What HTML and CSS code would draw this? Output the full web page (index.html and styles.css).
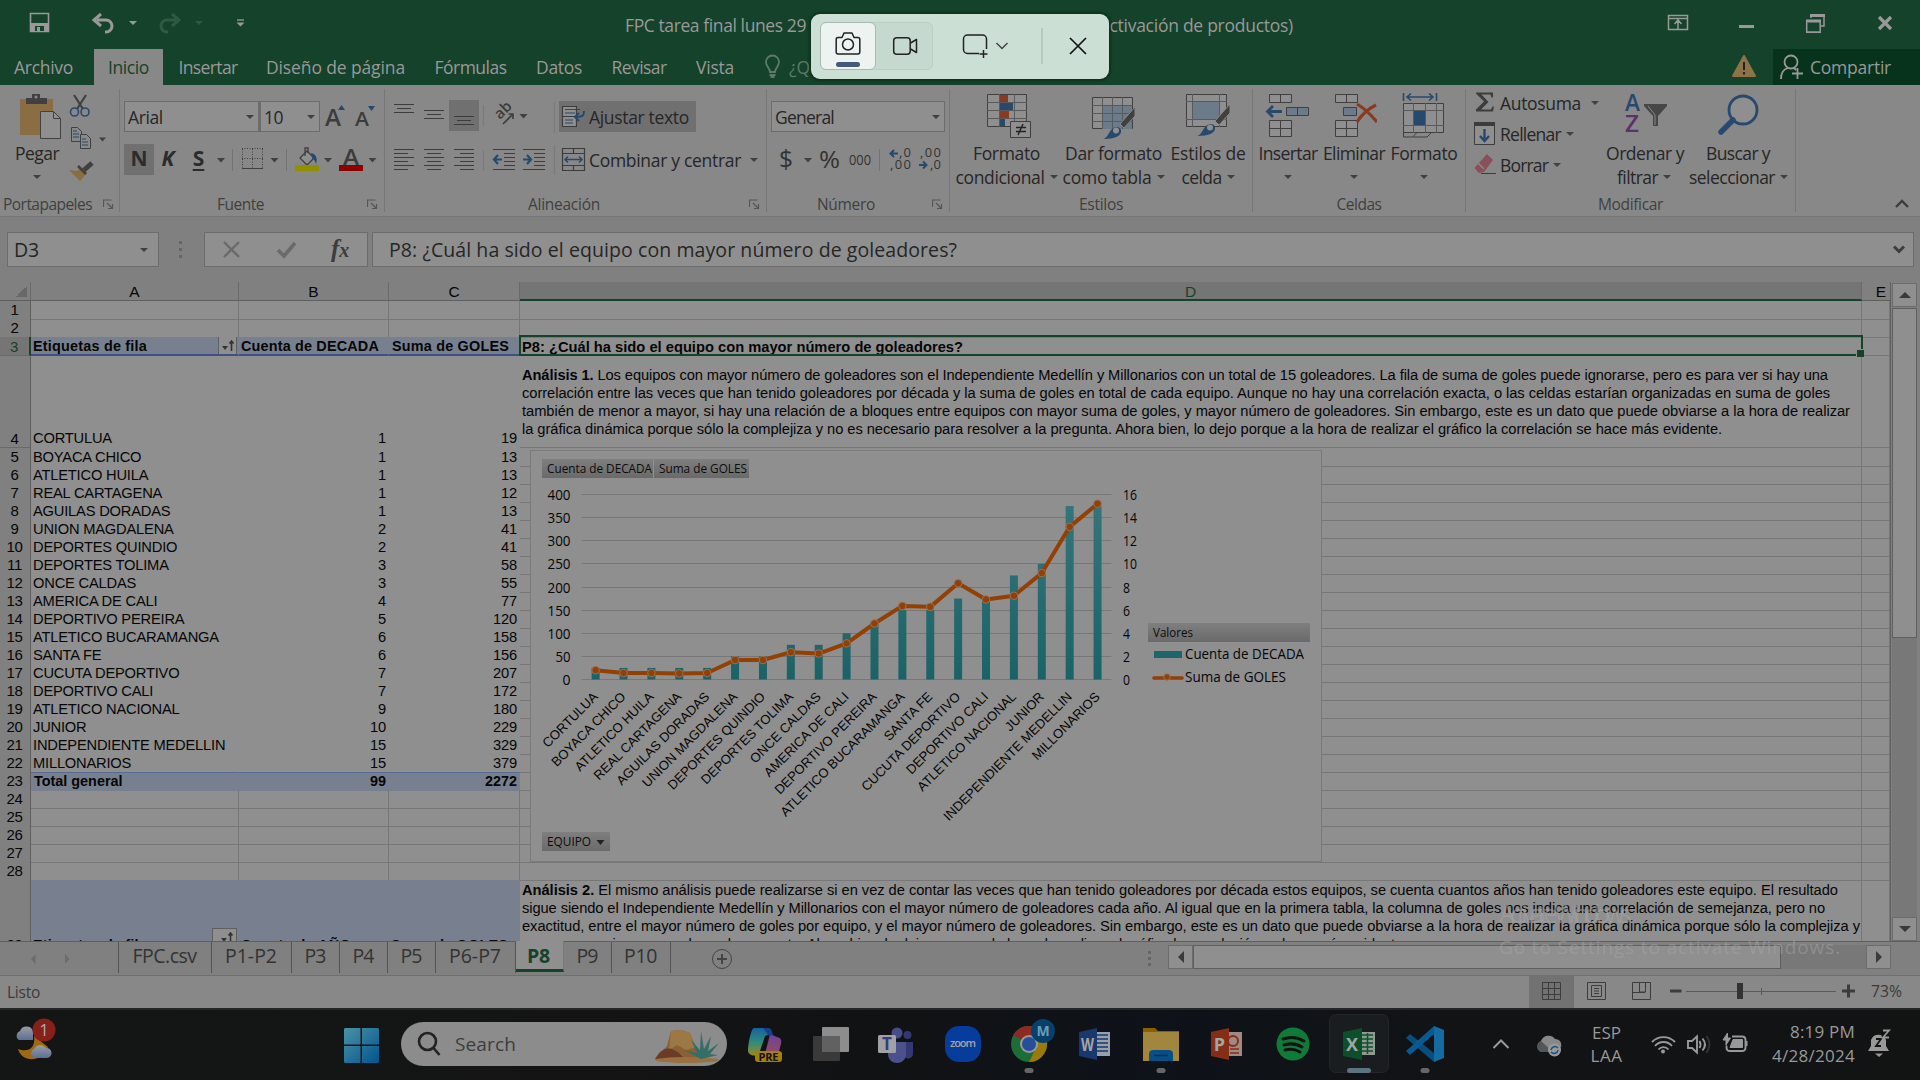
FILE: index.html
```html
<!DOCTYPE html>
<html lang="es">
<head>
<meta charset="utf-8">
<title>FPC tarea final</title>
<link rel="stylesheet" href="styles.css">
</head>
<body>
<div class="screen">

<header class="titlebar">
  <svg class="quick" width="260" height="49" viewBox="0 0 260 49" fill="none">
    <path d="M30.5 13.5h18v18h-18z" stroke="#999" stroke-width="1.6"/><path d="M31 23h17v9h-17z" fill="#999"/><path d="M35 26h9v5h-9z" fill="#15422a"/><path d="M37 27h3v5h-3z" fill="#999"/>
    <path d="M97 20h9a6 6 0 0 1 0 12h-1M101 14l-7 6 7 6" stroke="#999" stroke-width="3"/>
    <path d="M129 21h8l-4 4z" fill="#999"/>
    <path d="M176 20h-9a6 6 0 0 0 0 12h1M172 14l7 6-7 6" stroke="#2f5a42" stroke-width="3"/>
    <path d="M195 21h8l-4 4z" fill="#2f5a42"/>
    <path d="M237 20h7" stroke="#999" stroke-width="1.3"/><path d="M236.500 22.500h8l-4 4z" fill="#999"/>
  </svg>
  <div class="doc"><span data-w="181">FPC tarea final lunes 29</span><span data-w="193">activación de productos)</span></div>
  <svg class="winctl" width="260" height="49" viewBox="1660 0 260 49" fill="none" stroke="#999">
    <path d="M1668.500 15.500h19v14h-19zM1668.500 18.500h19M1678 29v-9M1674.500 24l3.500-4 3.500 4" stroke-width="1.5"/>
    <path d="M1739 26.500h15" stroke-width="3"/>
    <path d="M1811 18v-3h13v11h-3" stroke-width="1.5"/><path d="M1810 15.500h15M1806 21h15" stroke-width="3"/><path d="M1806.700 20v12h13.500v-12" stroke-width="1.500"/><path d="M1806 32.500h15" stroke-width="1"/>
    <path d="M1879 17l12 12M1891 17l-12 12" stroke-width="3.200"/>
  </svg>
</header>

<nav class="tabs">
  <span class="tab t1"><b data-w="59">Archivo</b></span>
  <span class="tab t2 on"><b data-w="41">Inicio</b></span>
  <span class="tab t3"><b data-w="59">Insertar</b></span>
  <span class="tab t4"><b data-w="139">Diseño de página</b></span>
  <span class="tab t5"><b data-w="72">Fórmulas</b></span>
  <span class="tab t6"><b data-w="46">Datos</b></span>
  <span class="tab t7"><b data-w="55">Revisar</b></span>
  <span class="tab t8"><b data-w="38">Vista</b></span>
  <svg class="bulb" width="16" height="26" viewBox="0 -1 16 26" fill="none" stroke="#5d7a69" stroke-width="1.800"><path d="M5 17c0-4-4-5-4-10a6.500 6.500 0 0 1 13 0c0 5-4 6-4 10zM4.500 20h6M5.500 22h4"/></svg>
  <span class="ask">¿Qué desea</span>
  <svg class="warn" width="24" height="24" viewBox="0 0 24 24"><path d="M12 2l11 20H1z" fill="#8d7447" stroke="#8d7447" stroke-width="2" stroke-linejoin="round"/><path d="M12 8v8M12 18v2.500" stroke="#222" stroke-width="2"/></svg>
  <span class="share"><svg width="24" height="26" viewBox="0 0 24 26" fill="none" stroke="#999" stroke-width="1.800"><circle cx="11" cy="8" r="6.500"/><path d="M1 25c0-6 3-10 7-11M14 14l2 2M17.500 14v11M12 19.500h11"/></svg><b data-w="81">Compartir</b></span>
</nav>

<section class="ribbon">
  <div class="group g1">
    <div class="body">
      <div class="big paste">
        <svg width="42" height="46" viewBox="20 93 42 46"><path d="M20 99h33v36h-33z" fill="#8a6d42"/><path d="M26 98h6v-4h8v4h7v6h-21z" fill="#404040"/><circle cx="36" cy="97" r="1.500" fill="#888"/><path d="M40.500 111.500h13l7 7v20h-20z" fill="#8f8f8f" stroke="#404040"/><path d="M53.500 111.500v7h7" fill="none" stroke="#404040"/></svg>
        <span data-w="44">Pegar</span><i class="caret"></i>
      </div>
      <svg width="46" height="92" viewBox="66 93 46 92" fill="none">
        <path d="M74 95l9 14M86 95l-9 14" stroke="#404040" stroke-width="2.200"/><circle cx="74.500" cy="112" r="4" stroke="#27496d" stroke-width="1.600"/><circle cx="85" cy="112" r="4" stroke="#27496d" stroke-width="1.600"/>
        <path d="M71.500 127.500h6l4 4v10h-10z" stroke="#404040"/><path d="M73 131h4M73 134h6M73 137h6" stroke="#27496d"/>
        <path d="M80.500 134.500h6l4 4v10h-10z" fill="#8a8a8a" stroke="#404040"/><path d="M82 139h4M82 142h6M82 145h6" stroke="#27496d"/>
        <path d="M99 137.500h7l-3.500 4z" fill="#404040"/>
        <path d="M92 163l-9 8" stroke="#404040" stroke-width="5"/><path d="M69 170l7 1 6-3 5 5-7 8z" fill="#8a6d42"/><path d="M78 166l8 8" stroke="#404040" stroke-width="2.500"/>
      </svg>
    </div>
    <div class="label"><span data-w="89">Portapapeles</span><svg class="dlg" width="11" height="11" viewBox="0 0 11 11"><use href="#launch"/></svg></div>
  </div>

  <div class="group g2">
    <div class="body col">
      <div class="line"><span class="combo font">Arial<i class="caret"></i></span><span class="combo size">10<i class="caret"></i></span>
        <svg width="56" height="32" viewBox="322 101 56 32"><text x="325" y="126" class="ga" font-size="24" textLength="16" lengthAdjust="spacingAndGlyphs">A</text><path d="M338 110h7l-3.500-5z" fill="#27496d"/><text x="355" y="126" class="ga" font-size="20" textLength="14" lengthAdjust="spacingAndGlyphs">A</text><path d="M368 106h7l-3.500 5z" fill="#27496d"/></svg></div>
      <div class="line"><span class="biu on">N</span><span class="biu it">K</span><span class="biu un">S</span>
        <svg width="166" height="32" viewBox="214 144 166 32" fill="none">
          <path d="M217 158h8l-4 4.500zM270.500 158h8l-4 4.500zM324 158h8l-4 4.500zM368.500 158h8l-4 4.500z" fill="#404040"/>
          <path d="M232.500 149v22M286.500 149v22" stroke="#747474"/>
          <path d="M242.500 149v19M262.500 149v19M252.500 149v19M242 148.500h21M242 158.500h21" stroke="#404040" stroke-dasharray="1 1.500"/><path d="M242 168.500h21" stroke="#404040"/>
          <path d="M300 158l7-7 7 7-7 7z" fill="#8f8f8f" stroke="#404040" stroke-width="1.300"/><path d="M305 156v-8h3v5" stroke="#404040" stroke-width="1.300"/><path d="M311 153c5 1 7 5 5 11-1-4-3-5-4-6z" fill="#27496d"/><path d="M295 165h24v6h-24z" fill="#919100"/>
          <text x="343" y="164.500" class="ga" font-size="21" textLength="16" lengthAdjust="spacingAndGlyphs">A</text><path d="M339 165h24v6h-24z" fill="#8c0000"/>
        </svg></div>
    </div>
    <div class="label"><span data-w="47">Fuente</span><svg class="dlg" width="11" height="11" viewBox="0 0 11 11"><g id="launch" fill="none" stroke="#555"><path d="M.5 8V1h8M4 4l5 5M9.500 5v4.500H5" stroke-width="1.200"/></g></svg></div>
  </div>

  <div class="group g3">
    <div class="body col">
      <div class="line">
        <svg width="172" height="34" viewBox="387 100 172 34" fill="none" stroke="#3c3c3c" stroke-width="1.200">
          <path d="M449 100h30v31h-30z" fill="#707070" stroke="none"/>
          <path d="M394 104.500h20M397 108.500h14M394 112.500h20M424 110.500h20M427 114.500h14M424 118.500h20M454 116.500h20M457 120.500h14M454 124.500h20"/>
          <path d="M483.500 105v21M554.500 102v31" stroke="#7b7b7b"/>
          <text x="0" y="0" transform="translate(500 120) rotate(-45)" class="ga" stroke="none" font-size="15">ab</text>
          <path d="M503 124l10-10M508.500 114h4.500v5" stroke-width="1.600"/><path d="M519.500 114h8l-4 4.500z" fill="#404040" stroke="none"/>
        </svg>
        <span class="wrapbtn"><svg width="25" height="24" viewBox="562 104 25 24" fill="none" stroke="#3c3c3c" stroke-width="1.200"><path d="M563.500 105.500h14v20h-14zM563.500 115.500h14" fill="#8f8f8f"/><path d="M566 108.500h15M566 112h10M566 119h8M566 122h8" stroke="#27496d"/><path d="M585 110c0 5-2 6-8 6M580 112l-4 4 4 4" stroke="#27496d" stroke-width="2"/></svg><span data-w="100">Ajustar texto</span></span>
      </div>
      <div class="line">
        <svg width="200" height="30" viewBox="387 145 200 30" fill="none" stroke="#3c3c3c" stroke-width="1.200">
          <path d="M394 149.500h20M394 153.500h14M394 157.500h20M394 161.500h14M394 165.500h20M394 169.500h14M424 149.500h20M427 153.500h14M424 157.500h20M427 161.500h14M424 165.500h20M427 169.500h14M454 149.500h20M460 153.500h14M454 157.500h20M460 161.500h14M454 165.500h20M460 169.500h14"/>
          <path d="M483.500 150v21" stroke="#7b7b7b"/>
          <path d="M493 149.500h22M504 153.500h11M504 157.500h11M504 161.500h11M504 165.500h11M493 169.500h22M523 149.500h22M534 153.500h11M534 157.500h11M534 161.500h11M534 165.500h11M523 169.500h22"/>
          <path d="M502 159.500h-8M498 155l-4 4.500 4 4.500M523 159.500h8M527 155l4 4.500-4 4.500" stroke="#27496d" stroke-width="2.200"/>
          <path d="M554.500 145v30" stroke="#7b7b7b"/>
          <path d="M562.500 148.500h22v22h-22zM562.500 153.500h22M562.500 165.500h22M573.500 148v5M573.500 166v5"/><path d="M565 159.500h17M568 156.500l-3 3 3 3M579 156.500l3 3-3 3" stroke="#27496d" stroke-width="1.500"/>
        </svg>
        <span class="merge" data-w="152">Combinar y centrar</span><i class="caret"></i>
      </div>
    </div>
    <div class="label"><span data-w="72">Alineación</span><svg class="dlg" width="11" height="11" viewBox="0 0 11 11"><use href="#launch"/></svg></div>
  </div>

  <div class="group g4">
    <div class="body col">
      <div class="line"><span class="combo num"><span data-w="59">General</span><i class="caret"></i></span></div>
      <div class="line">
        <svg width="174" height="32" viewBox="771 144 174 32" fill="none">
          <g class="gn"><text x="779" y="168" font-size="25" textLength="14" lengthAdjust="spacingAndGlyphs">$</text><text x="819" y="168" font-size="24" textLength="21" lengthAdjust="spacingAndGlyphs">%</text><text x="849" y="164.500" font-size="14" textLength="22" lengthAdjust="spacingAndGlyphs">000</text><text x="899" y="157" font-size="13" textLength="12">,0</text><text x="890" y="169" font-size="13" textLength="21">,00</text><text x="920" y="157" font-size="13" textLength="21">,00</text><text x="930" y="169" font-size="13" textLength="11">,0</text></g>
          <path d="M804 158h8l-4 4.500z" fill="#404040"/><path d="M879.500 149v22" stroke="#747474"/>
          <path d="M898 153.500h-7M894 150l-3.500 3.500 3.500 3.500M919 165h7M923 161.500l3.500 3.500-3.500 3.500" stroke="#27496d" stroke-width="2"/>
        </svg>
      </div>
    </div>
    <div class="label"><span data-w="58">Número</span><svg class="dlg" width="11" height="11" viewBox="0 0 11 11"><use href="#launch"/></svg></div>
  </div>

  <div class="group g5">
    <div class="body">
      <div class="big b51">
        <svg width="46" height="46" viewBox="986 93 46 46" fill="none" stroke="#3f3f3f"><path d="M987.500 94.500h39v32h-39z" fill="#8f8f8f"/><path d="M987 102.500h40M987 110.500h40M987 118.500h40M999.500 94v33M1014.500 94v33" stroke="#5a5a5a"/><path d="M1000 95h8v7h-8zM1000 111h9v7h-9z" fill="#8a3a22" stroke="none"/><path d="M1000 103h13v7h-13zM1000 119h5v7h-5z" fill="#27496d" stroke="none"/><path d="M1010.500 121.500h20v16h-20z" fill="#8f8f8f"/><path d="M1016 127.500h10M1016 131.500h10M1023 124l-5 11" stroke="#222" stroke-width="1.400"/></svg>
        <span data-w="67">Formato</span><span class="l2"><span data-w="89">condicional</span><i class="caret"></i></span>
      </div>
      <div class="big b52">
        <svg width="46" height="46" viewBox="1093 93 46 46" fill="none" stroke="#3f3f3f"><path d="M1094.500 97.500h40v31h-40z" fill="#8f8f8f"/><path d="M1105 105h29v24h-29z" fill="#6b7b8a" stroke="none"/><path d="M1094 105.500h41M1094 113.500h41M1094 121.500h41M1104.500 97v32M1114.500 97v32M1124.500 97v32" stroke="#5a5a5a"/><path d="M1137 107v9l-11 12-4-4z" fill="#404040" stroke="#888"/><path d="M1105 139c4-1 5-5 8-9 3-4 9-4 10 0 1 6-6 9-18 9z" fill="#27496d" stroke="none"/><circle cx="1118" cy="130.500" r="3" fill="#8f8f8f" stroke="none"/></svg>
        <span data-w="97">Dar formato</span><span class="l2"><span data-w="89">como tabla</span><i class="caret"></i></span>
      </div>
      <div class="big b53">
        <svg width="46" height="46" viewBox="1186 93 46 46" fill="none" stroke="#3f3f3f"><path d="M1187.500 94.500h40v32h-40z" fill="#8f8f8f"/><path d="M1187 101.500h41M1187 119.500h41M1193.500 94v33M1220.500 94v33" stroke="#5a5a5a"/><path d="M1194 102h26v17h-26z" fill="#6b7b8a" stroke="none"/><path d="M1231 104v9l-11 12-4-4z" fill="#404040" stroke="#888"/><path d="M1198 136c4-1 5-5 8-9 3-4 9-4 10 0 1 6-6 9-18 9z" fill="#27496d" stroke="none"/><circle cx="1211" cy="127.500" r="3" fill="#8f8f8f" stroke="none"/></svg>
        <span data-w="75">Estilos de</span><span class="l2"><span data-w="40">celda</span><i class="caret"></i></span>
      </div>
    </div>
    <div class="label"><span data-w="44">Estilos</span></div>
  </div>

  <div class="group g6">
    <div class="body">
      <div class="big b61">
        <svg width="46" height="46" viewBox="1266 93 46 46" fill="none" stroke="#3f3f3f"><path d="M1270.500 94.500h22v8h-22zM1281.500 94v8M1270.500 120.500h22v16h-22zM1270.500 128.500h22M1281.500 120v16" fill="#8f8f8f"/><path d="M1287.500 107.500h22v8h-22zM1298.500 107v8" fill="#6b7b8a"/><path d="M1283 111.500h-14M1274 106l-5.500 5.500 5.500 5.500" stroke="#27496d" stroke-width="2.800"/></svg>
        <span data-w="59">Insertar</span><i class="caret"></i>
      </div>
      <div class="big b62">
        <svg width="46" height="46" viewBox="1331 93 46 46" fill="none" stroke="#3f3f3f"><path d="M1335.500 94.500h22v8h-22zM1346.500 94v8M1335.500 120.500h22v16h-22zM1335.500 128.500h22M1346.500 120v16" fill="#8f8f8f"/><path d="M1343.500 107.500h13v8h-13z" fill="#6b7b8a"/><path d="M1357 104q10 6 20 18M1376 105q-12 6-19 17" stroke="#8a3a22" stroke-width="3.200"/></svg>
        <span data-w="62">Eliminar</span><i class="caret"></i>
      </div>
      <div class="big b63">
        <svg width="46" height="46" viewBox="1401 93 46 46" fill="none" stroke="#3f3f3f"><path d="M1403.500 103.500h40v29h-40z" fill="#8f8f8f"/><path d="M1403 110.500h41M1403 125.500h41M1413.500 103v30M1425.500 103v30M1436.500 103v30" stroke="#5a5a5a"/><path d="M1414 111h11v14h-11z" fill="#27496d" stroke="none"/><path d="M1403.500 132v5h9l4-4M1413 137h14l4-4"/><path d="M1403.500 93v8M1436.500 93v8M1407 97h26M1411 93.500l-4 3.500 4 3.500M1429 93.500l4 3.500-4 3.500" stroke="#27496d" stroke-width="1.600"/></svg>
        <span data-w="67">Formato</span><i class="caret"></i>
      </div>
    </div>
    <div class="label"><span data-w="45">Celdas</span></div>
  </div>

  <div class="group g7">
    <div class="body">
      <div class="edit">
        <div><svg width="24" height="24" viewBox="1473 92 24 24"><path d="M1476 93.500h17v5h-1.500l-1-3h-9l7 7.500-7.500 7.500h10l1.500-3h1.500l-1 5h-17v-2l8-8-8-8z" fill="#3c3c3c"/></svg><span data-w="81">Autosuma</span><i class="caret far"></i></div>
        <div><svg width="24" height="24" viewBox="1473 122 24 24" fill="none"><path d="M1474.500 122.500h20v22h-20z" fill="#8f8f8f" stroke="#3c3c3c"/><path d="M1474 122h21v4h-21z" fill="#3c3c3c"/><path d="M1484.500 129v12M1480 136l4.500 5 4.500-5" stroke="#27496d" stroke-width="2.400"/></svg><span data-w="61">Rellenar</span><i class="caret"></i></div>
        <div><svg width="24" height="24" viewBox="1473 153 24 24"><path d="M1487 154l6 6-9 12-5 1-4.500-5z" fill="#8a4f59"/><path d="M1478 163l6 6" stroke="#888" stroke-width="1.500"/><path d="M1481 173.500h15" stroke="#3c3c3c"/></svg><span data-w="48">Borrar</span><i class="caret"></i></div>
      </div>
      <div class="big b71">
        <svg width="46" height="46" viewBox="1622 93 46 46"><text x="1625" y="111" font-size="23" fill="#27496d" class="az" textLength="15" lengthAdjust="spacingAndGlyphs">A</text><text x="1625" y="132" font-size="23" fill="#5a3169" class="az" textLength="14" lengthAdjust="spacingAndGlyphs">Z</text><path d="M1644 104h23v2l-9 10v10h-5v-10l-9-10z" fill="#474747"/><path d="M1648 106l7 9v10" stroke="#888" fill="none"/></svg>
        <span data-w="78">Ordenar y</span><span class="l2"><span data-w="41">filtrar</span><i class="caret"></i></span>
      </div>
      <div class="big b72">
        <svg width="46" height="46" viewBox="1716 93 46 46"><circle cx="1744" cy="110" r="14" fill="#8f8f8f" stroke="#27496d" stroke-width="2.800"/><path d="M1734 120l-12 12" stroke="#27496d" stroke-width="5.500" stroke-linecap="round"/></svg>
        <span data-w="64">Buscar y</span><span class="l2"><span data-w="86">seleccionar</span><i class="caret"></i></span>
      </div>
    </div>
    <div class="label"><span data-w="65">Modificar</span></div>
  </div>
  <svg class="collapse" width="14" height="9" viewBox="0 0 14 9" fill="none" stroke="#3c3c3c" stroke-width="2.400"><path d="M1 8l6-6 6 6"/></svg>
</section>

<section class="formula">
  <span class="fbox name"><span data-w="25">D3</span><i class="caret"></i></span>
  <svg class="vdots" width="4" height="17" viewBox="0 0 4 17" fill="#666"><path d="M0 0h3v3H0zM0 7h3v3H0zM0 14h3v3H0z"/></svg>
  <span class="fbox fx"><svg width="106" height="33" viewBox="222 233 106 33" fill="none" stroke="#6a6a6a"><path d="M224 242l15 15M239 242l-15 15" stroke-width="2.400"/><path d="M278 250l6 6 11-13" stroke-width="3.600"/></svg><em>f<small>x</small></em></span>
  <span class="fbox text"><span data-w="568">P8: ¿Cuál ha sido el equipo con mayor número de goleadores?</span><svg width="12" height="9" viewBox="0 0 12 9" fill="none" stroke="#3c3c3c" stroke-width="3"><path d="M1 1.500l5 5 5-5"/></svg></span>
</section>

<main class="work">
  <div class="sheet">
    <div class="row head"><span class="corner"></span><span>A</span><span>B</span><span>C</span><span class="sel">D</span><span class="last">E</span></div>
    <div class="rows" id="rows"></div>
    <div class="cursor"></div>
    <svg class="chart" id="chart" width="793" height="413" viewBox="530 449 793 413"></svg>
  </div>
  <div class="vscroll"><span class="sb"><i class="up"></i></span><span class="thumb"></span><span class="track"></span><span class="sb"><i class="dn"></i></span></div>
</main>

<section class="sheettabs">
  <svg class="nav" width="118" height="34" viewBox="0 0 118 34" fill="#6c6c6c"><path d="M35.500 12v10l-4.500-5zM65 12v10l4.500-5z"/></svg>
  <span class="st s1"><b data-w="64">FPC.csv</b></span><span class="st s2"><b data-w="52">P1-P2</b></span><span class="st s3"><b data-w="21">P3</b></span><span class="st s3"><b data-w="21">P4</b></span><span class="st s3"><b data-w="21">P5</b></span><span class="st s2"><b data-w="52">P6-P7</b></span><span class="st s3 on"><b data-w="23">P8</b></span><span class="st s3"><b data-w="21">P9</b></span><span class="st s4"><b data-w="33">P10</b></span>
  <svg class="plus" width="22" height="22" viewBox="0 0 22 22" fill="none" stroke="#444"><circle cx="11" cy="11" r="9.500"/><path d="M11 6v10M6 11h10" stroke-width="2"/></svg>
  <svg class="hdots" width="4" height="16" viewBox="0 0 4 16" fill="#666"><path d="M0 0h3v3H0zM0 6h3v3H0zM0 12h3v3H0z"/></svg>
  <div class="hscroll"><span class="sb"><i class="lf"></i></span><span class="thumb"></span><span class="track"></span><span class="sb"><i class="rt"></i></span></div>
</section>

<footer class="status">
  <span class="ready" data-w="33">Listo</span>
  <svg width="391" height="32" viewBox="1529 976 391 32" fill="none" stroke="#3c3c3c">
    <path d="M1529 976h45v32h-45z" fill="#727272" stroke="none"/>
    <path d="M1542.500 982.500h18v17h-18zM1542 988.500h19M1542 994.500h19M1548.500 982v18M1554.500 982v18"/>
    <path d="M1587.500 982.500h18v17h-18zM1591.500 985.500h10v11h-10zM1594 988.500h5M1594 991h5M1594 993.500h5"/>
    <path d="M1632.500 982.500h18v17h-18zM1639.500 982v10h6v-10M1632 992.500h13"/>
    <path d="M1670 991h11.500M1842 991h13M1848.500 984.500v13" stroke-width="3"/>
    <path d="M1686 991.500h150M1761.500 988v7" stroke="#5a5a5a"/><path d="M1737 983h6v16h-6z" fill="#333" stroke="none"/>
    <text x="1871" y="997" class="pct" textLength="31" lengthAdjust="spacingAndGlyphs">73%</text>
  </svg>
</footer>

<footer class="taskbar">
  <svg class="weather" width="60" height="60" viewBox="0 1014 60 60">
    <defs><linearGradient id="cl" x1="0" y1="0" x2="0" y2="1"><stop offset="0" stop-color="#9a9ca2"/><stop offset="1" stop-color="#5d6f96"/></linearGradient>
    <linearGradient id="win" x1="0" y1="0" x2="1" y2="1"><stop offset="0" stop-color="#4b93a5"/><stop offset="1" stop-color="#00548f"/></linearGradient></defs>
    <path d="M34 1036c2 12-6 17-16 13 4 14 24 14 30-2z" fill="#a0680f"/>
    <path d="M19 1040a5 5 0 0 1 1-9 7 7 0 0 1 13 0v9z" fill="url(#cl)"/><path d="M34 1058a5 5 0 0 1 0-9 7 7 0 0 1 12-1 5 5 0 0 1 1 10z" fill="url(#cl)"/>
    <circle cx="44" cy="1030" r="11.500" fill="#85201a"/><text x="44" y="1036" class="one">1</text>
  </svg>
  <svg class="start" width="35" height="35" viewBox="0 0 35 35" fill="url(#win)"><path d="M1 0h15.500v16.500H0V1zM18 0h16l1 1v15.500H18zM0 18h16.500v17H1l-1-1zM18 18h17v16l-1 1H18z"/></svg>
  <div class="search">
    <svg width="25" height="26" viewBox="0 0 25 26" fill="none" stroke="#222" stroke-width="2.600"><circle cx="10.500" cy="10.500" r="8.500"/><path d="M16.500 17l6 7"/></svg><span data-w="61">Search</span>
    <svg class="desert" width="66" height="36" viewBox="0 0 66 36"><path d="M2 31l12-13 4-15 10-1 9 3 6 14 11 12z" fill="#8a6035"/><path d="M18 3l10-1 9 3 6 14-10 3-9-5-8 5z" fill="#9c7844"/><path d="M2 31c8-14 16-12 24-6l8 8z" fill="#6b3c25"/><ellipse cx="34" cy="32" rx="32" ry="3" fill="#99703f"/><path d="M48 31L31 22l13 3-6-13 9 10 1-19 3 18 7-13-3 15 11-8-9 11 8 1z" fill="#336f68"/></svg>
  </div>
  <div class="apps">
    <svg viewBox="0 0 66 72"><defs><linearGradient id="cp" x1="0" y1="0" x2="0" y2="1"><stop offset="0" stop-color="#17629b"/><stop offset=".5" stop-color="#2e8b7e"/><stop offset="1" stop-color="#9a8a1a"/></linearGradient><linearGradient id="cq" x1="0" y1="0" x2="0" y2="1"><stop offset="0" stop-color="#6a3fa0"/><stop offset="1" stop-color="#a0504a"/></linearGradient></defs><path d="M22 20h12c4 0 5 2 6 5l-7 3-6 18c-1 3-11 2-11-3 0-6 3-23 6-23z" fill="url(#cp)"/><path d="M38 26l7 3c4 1 5 3 4 7l-4 14H32z" fill="url(#cq)"/><path d="M31 20h5c3 0 4 3 5 7l-4 1z" fill="#17408a"/><rect x="23" y="43" width="27" height="11" rx="3" fill="#a37f0b"/><text x="36.500" y="52.500" class="pre" textLength="20">PRE</text></svg>
    <svg viewBox="0 0 66 72"><rect x="15" y="28" width="27" height="25" rx="1" fill="#3a3a3a"/><rect x="24" y="19" width="27" height="25" rx="1" fill="#8d8d8d"/><path d="M24 28h18v16H24z" fill="#616161"/></svg>
    <svg viewBox="0 0 66 72"><circle cx="33" cy="25" r="5.500" fill="#474b86"/><circle cx="43.500" cy="27" r="4" fill="#34376f"/><path d="M38 34h11v12c0 5-8 6-9 2z" fill="#34386f"/><path d="M24 34h18v12c0 12-18 12-18 0z" fill="#4c508c"/><rect x="14" y="27" width="18" height="18" rx="1.500" fill="#a0a0a5"/><text x="23" y="42" class="lt" fill="#363b82">T</text></svg>
    <svg viewBox="0 0 66 72"><rect x="15" y="18" width="36" height="36" rx="14" fill="#063c9b"/><text x="33" y="39" class="zm" textLength="26">zoom</text></svg>
    <svg viewBox="0 0 66 72"><circle cx="33" cy="36" r="18" fill="#1d6d36"/><path d="M33 36L17.400 27A18 18 0 0 1 48.600 27z" fill="#8d2b22"/><path d="M33 36h0L48.600 27A18 18 0 0 1 33 54l7-14z" fill="#9a7a0b"/><circle cx="33" cy="36" r="9" fill="#999"/><circle cx="33" cy="36" r="7" fill="#254f9b"/><circle cx="47" cy="23" r="12" fill="#07406b"/><text x="47" y="28" class="em">M</text><rect x="28.500" y="60" width="9" height="5" rx="2.500" fill="#666"/></svg>
    <svg viewBox="0 0 66 72"><path d="M33 24h15v24H33z" fill="#99a0ab"/><path d="M35 27h11M35 31h11M35 35h11M35 39h11M35 43h11" stroke="#19386b" stroke-width="1.500"/><path d="M17 24l18-4v32l-18-4z" fill="#19386b"/><text x="25.500" y="43" class="of" textLength="13" lengthAdjust="spacingAndGlyphs">W</text></svg>
    <svg viewBox="0 0 66 72"><path d="M15 20h12l3 3h21v12H15z" fill="#8a6100"/><rect x="15" y="24" width="36" height="29" fill="#a1873d"/><path d="M21 53v-7c0-3 2-4 4-4h16c2 0 4 1 4 4v7z" fill="#094f87"/><path d="M26 47.500h14" stroke="#052f55" stroke-width="1.500"/><rect x="28.500" y="60" width="9" height="5" rx="2.500" fill="#666"/></svg>
    <svg viewBox="0 0 66 72"><path d="M33 24h15v24H33z" fill="#a08983"/><path d="M36 41h9M36 45h9" stroke="#842e18" stroke-width="1.500"/><circle cx="39" cy="33" r="5" fill="none" stroke="#842e18" stroke-width="2"/><path d="M17 24l18-4v32l-18-4z" fill="#842e18"/><text x="25.500" y="43" class="of">P</text></svg>
    <svg viewBox="0 0 66 72"><circle cx="33" cy="36" r="16.500" fill="#107b38"/><path d="M23 31q11-4 21 2M24 37q10-3 18 2M25 42q8-2 15 2" fill="none" stroke="#121212" stroke-width="3" stroke-linecap="round"/></svg>
    <svg viewBox="0 0 66 72"><rect x="3.500" y="6.500" width="59" height="58" rx="6" fill="#191d1f" stroke="#222628"/><path d="M33 24h16v23H33z" fill="#8e9a92"/><path d="M36 27h11M36 31h11M36 35h11M36 39h11M36 43h11M41.500 25v21" stroke="#10502c" stroke-width="1.500"/><path d="M17 24l19-4v32l-19-4z" fill="#0e4f2b"/><text x="26" y="43" class="of">X</text><rect x="21" y="60" width="24" height="5" rx="2.500" fill="#5c7380"/></svg>
    <svg viewBox="0 0 66 72"><path d="M14 30l4-4 24 19v9z" fill="#0a4e80"/><path d="M14 43l4 4 24-21v-8z" fill="#075a94"/><path d="M42 18l10 4v28l-10 4z" fill="#156a9f"/><rect x="28.500" y="60" width="9" height="5" rx="2.500" fill="#666"/></svg>
  </div>
  <svg class="tray1" width="80" height="72" viewBox="1490 1008 80 72" fill="none"><path d="M1493.500 1048l7.500-7.500 7.500 7.500" stroke="#999" stroke-width="2"/><path d="M1541 1052a6 6 0 0 1 0-11 8 8 0 0 1 14-2c5 0 7 4 6 8l-6 5z" fill="#888"/><path d="M1541 1052a6 6 0 0 1 0-11l12 11z" fill="#555"/><circle cx="1554.500" cy="1050" r="6.500" fill="#999"/><path d="M1551 1050a4 4 0 0 1 7-2M1558 1050a4 4 0 0 1-7 2" stroke="#15508a" stroke-width="1.600"/></svg>
  <div class="lang"><span data-w="29">ESP</span><span data-w="32">LAA</span></div>
  <svg class="tray2" width="106" height="72" viewBox="1648 1008 106 72" fill="none" stroke="#999" stroke-width="1.900"><path d="M1652 1042a16 16 0 0 1 23 0M1655 1046a11 11 0 0 1 17 0M1658.500 1049.500a6.500 6.500 0 0 1 10 0"/><circle cx="1663" cy="1051.500" r="2" fill="#999" stroke="none"/><path d="M1688 1041v7h4l5 4.500v-16l-5 4.500zM1699.500 1041q2 3.500 0 7M1702.500 1038.500q5 6 0 12"/><path d="M1706.500 1036q6 8 0 17" stroke="#333"/><path d="M1732 1036.500h10c2.500 0 3.500 1 3.500 3.500v7.500c0 2.500-1 3.500-3.500 3.500h-12c-2.500 0-3.500-1-3.500-3.500v-2"/><path d="M1730 1047.500h12.500v-8h-9.500z" fill="#999" stroke-width="1"/><path d="M1727.500 1033l-4.500 7h3v5l4.500-7h-3z" fill="#999" stroke-width="1"/><path d="M1746 1043.500h1.500" stroke-width="5"/></svg>
  <div class="clock"><span data-w="65">8:19 PM</span><span data-w="83">4/28/2024</span></div>
  <svg class="bell" width="30" height="36" viewBox="1864 1028 30 36"><path d="M1868 1053l3-5v-6a8 8 0 0 1 15 0v6l3 5z" fill="#999"/><path d="M1875 1055.500h8l-4 3.500z" fill="#999"/><path d="M1876 1041h5l-5 7h5" fill="none" stroke="#121212" stroke-width="1.800"/><path d="M1880 1030h12v10h-10z" fill="#131515"/><path d="M1883 1032.500h6l-6 7h6" fill="none" stroke="#999" stroke-width="1.800"/></svg>
</footer>

<div class="mark"><span data-w="234">Activate Windows</span><span data-w="342">Go to Settings to activate Windows.</span></div>

<div class="snip">
  <div class="modes"><span class="cam"><svg width="26" height="38" viewBox="835 32 26 38" fill="none" stroke="#222" stroke-width="1.500"><path d="M838 38.500h4l2-4.500h8l2 4.500h4q1.800 0 1.800 2v12.500q0 2-1.800 2h-20q-1.800 0-1.800-2V40.500q0-2 1.800-2z" stroke-linejoin="round"/><circle cx="848" cy="45.500" r="5.500"/><rect x="836" y="63" width="24" height="5" rx="2.500" fill="#44597b" stroke="none"/></svg></span>
  <span class="vid"><svg width="26" height="22" viewBox="892 34 26 22" fill="none" stroke="#222" stroke-width="1.500"><rect x="893.700" y="36.700" width="16.500" height="16.500" rx="3"/><path d="M910.500 42l6-3.500v13l-6-3.500" stroke-linejoin="round"/></svg></span></div>
  <svg class="shape" width="50" height="28" viewBox="962 32 50 28" fill="none" stroke="#222" stroke-width="1.500"><path d="M979 53.500h-11.500a4 4 0 0 1-4-4V39a4 4 0 0 1 4-4h15a4 4 0 0 1 4 4v10M983.500 50v8M979.500 54h8"/><path d="M996.500 43l5.500 5.500 5.500-5.500" stroke="#444"/></svg>
  <i class="bar"></i>
  <svg class="x" width="18" height="18" viewBox="0 0 18 18" stroke="#111" stroke-width="1.700"><path d="M1 1l16 16M17 1L1 17"/></svg>
</div>
</div>
<script src="app.js"></script>
</body>
</html>
```
FILE: styles.css
```css
* { box-sizing: border-box; }
body { margin: 0; overflow: hidden; background: #121414; }
.screen { width: 1920px; height: 1080px; display: flex; flex-direction: column; position: relative; overflow: hidden; font-family: "Open Sans", "Noto Sans", sans-serif; font-size: 17.500px; color: #262626; }
svg { display: block; flex: none; }
[data-w] { display: inline-block; white-space: nowrap; flex: none; }
b { font-weight: 400; }
.caret { display: block; flex: none; width: 0; height: 0; border: 4px solid transparent; border-top: 4.500px solid #404040; border-bottom: 0; }

.titlebar { height: 49px; flex: none; background: #15422a; color: #999; display: flex; align-items: center; justify-content: space-between; }
.doc { width: 668px; display: flex; justify-content: space-between; margin-right: 367px; margin-left: 365px; flex: none; }

.tabs { height: 36px; flex: none; background: #15422a; color: #999; display: flex; align-items: center; }
.tab { height: 36px; display: flex; align-items: center; justify-content: center; flex: none; padding-bottom: 1px; }
.tab.on { background: #888; color: #15422a; }
.t1 { width: 94px; padding-right: 7px; }
.t2 { width: 69px; }
.t3 { width: 90px; }
.t4 { width: 165px; }
.t5 { width: 105px; }
.t6 { width: 72px; }
.t7 { width: 88px; }
.t8 { width: 64px; }
.bulb { margin-left: 18px; }
.ask { margin-left: 8px; padding-bottom: 1px; color: #5d7a69; width: 100px; white-space: nowrap; }
.warn { margin-left: 843px; margin-top: -2px; }
.share { margin-left: auto; width: 147px; height: 36px; background: #07321b; display: flex; align-items: center; gap: 6px; padding: 0 0 1px 7px; }

.ribbon { height: 132px; flex: none; background: #888; border-bottom: 1px solid #777; display: flex; padding-top: 4px; }
.group { height: 123px; flex: none; border-right: 1px solid #777; display: flex; flex-direction: column; justify-content: space-between; }
.g1 { width: 120px; }
.g2 { width: 265px; }
.g3 { width: 382px; }
.g4 { width: 183px; }
.g5 { width: 303px; }
.g6 { width: 213px; }
.g7 { width: 330px; }
.body { display: flex; height: 100px; padding-top: 4px; align-items: flex-start; }
.body.col { flex-direction: column; padding-top: 11px; gap: 10px; }
.line { display: flex; height: 33px; align-items: center; }
.label { height: 22px; margin-bottom: -3px; display: flex; align-items: center; justify-content: center; font-size: 15.500px; line-height: 22px; color: #404040; }
.dlg { margin-top: 1px; }
.g1 .label { padding-left: 3px; justify-content: flex-start; }
.g1 .dlg { margin-left: 11px; }
.g2 .label { justify-content: flex-end; padding-right: 6px; }
.g2 .dlg { margin-left: 103px; }
.g3 .label { justify-content: flex-end; padding-right: 6px; }
.g3 .dlg { margin-left: 149px; }
.g4 .label { justify-content: flex-end; padding-right: 6px; }
.g4 .dlg { margin-left: 57px; }
.big { display: flex; flex-direction: column; align-items: center; flex: none; }
.big > span { height: 24px; line-height: 24px; margin-top: 2px; }
.big > .l2 { margin-top: 0; display: flex; align-items: center; gap: 5px; }
.big > .caret { margin-top: 10px; }
.paste { width: 58px; margin-left: 8px; }
.paste svg { margin-left: 8px; }
.combo { height: 31px; border: 1px solid #6c6c6c; background: #8f8f8f; display: flex; align-items: center; justify-content: space-between; padding: 0 4px 0 3px; }
.font { width: 135px; margin-left: 4px; letter-spacing: -.4px; }
.size { width: 61px; border-left-width: 2px; letter-spacing: -.5px; }
.num { width: 174px; margin-left: 4px; }
.g2 .line svg { margin-left: 2px; }
.g2 .line + .line svg { margin-left: 0; }
.ga { font-family: "Open Sans", sans-serif; font-weight: 600; fill: #3c3c3c; }
.gn { font-family: "Open Sans", sans-serif; fill: #333; }
.az { font-family: "Open Sans", sans-serif; font-weight: 600; }
.biu { width: 30px; height: 31px; font-weight: 700; font-size: 21px; text-align: center; line-height: 29px; color: #2c2c2c; flex: none; }
.biu.on { margin-left: 4px; background: #707070; }
.it { font-style: italic; padding-right: 2px; }
.un { text-decoration: underline; text-underline-offset: 3px; text-decoration-thickness: 2px; padding-right: 1px; }
.g3 .line svg:first-child { margin-left: 2px; }
.wrapbtn { width: 137px; height: 31px; background: #707070; display: flex; align-items: center; gap: 3px; }
.merge { margin: 0 9px 0 2px; }
.g4 .line + .line svg { margin-left: 4px; }
.b51 { width: 97px; margin-left: 8px; }
.b51 svg { margin-left: 5px; }
.b52 { width: 107px; margin-left: 5px; }
.b53 { width: 80px; margin-left: 1px; }
.b61 { width: 66px; margin-left: 2px; }
.b62 { width: 66px; }
.b63 { width: 74px; }
.edit { width: 132px; display: flex; flex-direction: column; margin-left: 7px; gap: 7px; margin-top: -2px; }
.edit div { display: flex; align-items: center; height: 24px; gap: 3px; }
.edit .caret { margin-left: 2px; }
.edit .far { margin-left: 7px; }
.b71 { width: 80px; }
.b71 > .l2 { margin-left: -2px; }
.b72 { width: 96px; margin-left: 5px; }
.b72 > .l2 { margin-left: 1px; }
.collapse { margin: 110px 0 0 99px; }

.formula { height: 65px; flex: none; background: #808080; display: flex; align-items: center; padding: 0 0 0 7px; font-size: 19.500px; }
.fbox { height: 35px; border: 1px solid #6c6c6c; background: #8f8f8f; display: flex; align-items: center; flex: none; }
.name { width: 152px; justify-content: space-between; padding: 0 10px 0 6px; }
.vdots { margin: 0 21px 0 20px; }
.fx { width: 164px; padding-left: 17px; margin-right: 4px; }
.fx svg { margin-right: 3px; }
.fx em { font: italic 700 25px "Liberation Serif", serif; color: #3c3c3c; line-height: 28px; }
.fx small { font-size: 20px; }
.text { width: 1542px; padding: 0 8px 0 16px; justify-content: space-between; }

.work { height: 659px; flex: none; background: #808080; display: flex; overflow: hidden; }
.sheet { width: 1891px; position: relative; flex: none; font: 14.700px/18px "Liberation Sans", Arial, sans-serif; color: #060606; border-right: 1px solid #5f5f5f; overflow: hidden; }
.row { display: grid; grid-template-columns: 31px 208px 150px 131px 1342px 28px; }
.head { height: 19px; font-size: 15.500px; text-align: center; line-height: 20px; }
.head span { border-right: 1px solid #6a6a6a; border-bottom: 1px solid #5f5f5f; background: #808080; overflow: hidden; }
.head .sel { background: #757575; color: #15422a; border-bottom: 2px solid #15422a; }
.head .last { border-right: 0; padding-left: 10px; }
.head .corner { background: linear-gradient(135deg, transparent 50%, #686868 50%) 16px 4px / 11px 11px no-repeat #808080; }
.rows { background: #8f8f8f; }
.row > span { display: flex; align-items: flex-end; }
.head.row > span { display: block; }
.cell { border-right: 1px solid #777; border-bottom: 1px solid #777; padding: 0 2px; white-space: nowrap; overflow: hidden; }
.plain .data { border-color: transparent; letter-spacing: -.2px; }
.r4 > .cell, .r4 > .num1 { line-height: 17px; }
.r4 > .note { line-height: 18px; }
.num1 { border-bottom: 1px solid #6a6a6a; border-right: 1px solid #5f5f5f; background: #808080; justify-content: center; font-size: 15px; padding-right: 1px; letter-spacing: -.3px; }
.right { justify-content: flex-end; }
.r3 .num1 { background: #757575; color: #15422a; border-right: 2px solid #15422a; }
.fill .data { background: #78808f; font-weight: 700; font-size: 14.400px; border-color: transparent; }
.r3 .data { border-bottom: 2px solid #3d5282; }
.r3 > span, .r3 .data { line-height: 17px; }
.r3 .hl, .r29 .hl { justify-content: flex-start; }
.r3 .hl + .hl { padding-left: 2px; }
.r3 .hl + .hl + .hl { padding-left: 3px; }
.r3 [data-w] { line-height: 15px; }
.r3 .dcol strong { line-height: 16px; }
.r23 .data { border-top: 1px solid #556a94; }
.r23 .data:nth-child(2) { padding-left: 3px; }
.row > .note { display: block; padding-top: 10px; }
.r29 > .note { padding-top: 1px; }
.note div { white-space: nowrap; height: 18px; }
.fbtn { margin-left: auto; margin-right: -1px; width: 19px; height: 19px; margin-bottom: -1px; background: #8f8f8f; border: 1px solid #5f5f5f; flex: none; }
.r29 .fbtn { width: 25px; height: 27px; padding-left: 5px; }
.cursor { position: absolute; left: 519px; top: 53px; width: 1344px; height: 21px; border: 2px solid #15422a; }
.cursor::after { content: ""; position: absolute; right: -3px; bottom: -3px; width: 7px; height: 7px; background: #15422a; border: 1px solid #8f8f8f; border-width: 1px 0 0 1px; }
.chart { position: absolute; left: 530px; top: 167px; font-size: 13px; }
.chart .axis { font: 14px "Open Sans", sans-serif; fill: #050505; }
.chart .btn { font: 12.500px "Open Sans", sans-serif; fill: #0c0c0c; }
.chart .cat { font: 13.100px "Liberation Sans", Arial, sans-serif; fill: #050505; }

.vscroll { width: 26px; margin-left: 1px; display: flex; flex-direction: column; padding-top: 1px; }
.sb { width: 25px; height: 24px; background: #8f8f8f; border: 1px solid #6c6c6c; display: flex; align-items: center; justify-content: center; flex: none; }
.sb i { border: 6px solid transparent; }
.sb .up { border-width: 0 6px 6px; border-bottom-color: #3a3a3a; }
.sb .dn { border-width: 6px 6px 0; border-top-color: #3a3a3a; }
.sb .lf { border-width: 6px 6px 6px 0; border-right-color: #3a3a3a; }
.sb .rt { border-width: 6px 0 6px 6px; border-left-color: #3a3a3a; }
.vscroll .thumb { width: 25px; height: 330px; margin-top: 1px; background: #8f8f8f; border: 1px solid #5f5f5f; }
.vscroll .track { width: 25px; flex: 1; background: #787878; }

.sheettabs { height: 35px; flex: none; background: #808080; border-top: 1px solid #5f5f5f; border-bottom: 1px solid #6f6f6f; display: flex; align-items: flex-start; font-size: 19.500px; color: #333; }
.st { height: 31px; border-right: 1px solid #555; display: flex; align-items: center; justify-content: center; padding: 0 1px 4px 0; flex: none; }
.st.on { background: #8f8f8f; border-right-color: #777; border-bottom: 3px solid #15422a; color: #15422a; margin-top: -1px; padding: 0 2px 0 0; }
.st.on b { font-weight: 700; }
.s1 { width: 94px; border-left: 1px solid #555; }
.s2 { width: 80px; }
.s3 { width: 48px; }
.s4 { width: 59px; }
.plus { margin: 6px 0 0 40px; }
.hdots { margin: 9px 0 0 415px; }
.hscroll { margin: 3px 0 0 16px; display: flex; }
.hscroll .thumb { width: 588px; height: 24px; background: #8f8f8f; border: 1px solid #5f5f5f; }
.hscroll .track { width: 85px; height: 24px; background: #787878; }

.status { height: 32px; flex: none; background: #888; display: flex; align-items: center; justify-content: space-between; padding-left: 7px; font-size: 15.500px; color: #3a3a3a; }
.pct { font: 16px "Open Sans", sans-serif; fill: #3a3a3a; stroke: none; }

.taskbar { height: 72px; flex: none; background: linear-gradient(90deg, #131615 0, #141414 30%, #111214 46%, #0e1219 60%, #111315 75%, #121414 100%); border-top: 2px solid #242627; display: flex; align-items: center; color: #999; }
.weather { margin-top: -2px; }
.start { margin-left: 284px; }
.search { width: 326px; height: 44px; margin-left: 22px; margin-top: -2px; border-radius: 22px; background: #8c8c8c; display: flex; align-items: center; padding-left: 16px; color: #3d3d3d; font-size: 19px; }
.search span { margin-left: 13px; }
.desert { margin-left: 137px; margin-top: 3px; }
.apps { display: flex; margin-left: 5px; margin-top: -2px; }
.apps svg { width: 66px; height: 72px; }
.one { font: 17px "Open Sans", sans-serif; fill: #aaa; text-anchor: middle; }
.pre { font: 700 11px "Open Sans", sans-serif; fill: #111; text-anchor: middle; }
.lt { font: 700 17px "Open Sans", sans-serif; text-anchor: middle; }
.zm { font: 600 11px "Open Sans", sans-serif; fill: #a5a5a5; text-anchor: middle; }
.em { font: 700 14px "Open Sans", sans-serif; fill: #6c9bb4; text-anchor: middle; }
.of { font: 700 18px "Open Sans", sans-serif; fill: #a5a5a5; text-anchor: middle; }
.tray1 { margin-left: 32px; margin-top: -2px; }
.tray2 { margin-left: 24px; margin-top: -2px; }
.lang { width: 33px; margin-left: 20px; margin-right: 1px; margin-top: -2px; display: flex; flex-direction: column; align-items: center; font-size: 17px; line-height: 23px; }
.clock { width: 90px; margin-left: 11px; display: flex; flex-direction: column; align-items: flex-end; font-size: 17px; line-height: 24px; margin-top: -3px; }
.bell { margin-left: 9px; margin-top: -2px; }

.mark { position: absolute; left: 1499px; top: 896px; display: flex; flex-direction: column; color: rgba(165, 165, 165, .5); font-size: 25px; line-height: 34px; }
.mark span + span { font-size: 19px; }

.snip { position: absolute; left: 811px; top: 14px; width: 298px; height: 65px; border-radius: 9px; background: #cbdfd5; box-shadow: 0 0 2px 2px rgba(5, 35, 20, .5); display: flex; align-items: center; padding: 0 0 2px 9px; }
.modes { width: 113px; height: 48px; border: 1px solid #bccfc5; border-radius: 6px; background: #c5d9cf; display: flex; align-items: center; flex: none; }
.cam { width: 56px; height: 48px; margin-left: -1px; border: 1px solid #a9b9b1; border-radius: 6px; background: #edf3f1; display: flex; align-items: center; justify-content: center; padding-top: 8px; }
.vid { margin-left: 16px; }
.shape { margin-left: 29px; }
.bar { width: 2px; height: 36px; background: #b7c9c0; margin-left: 29px; }
.snip .x { margin-left: 26px; }
```
FILE: app.js
```js
const teams = [
  ["CORTULUA", 1, 19], ["BOYACA CHICO", 1, 13], ["ATLETICO HUILA", 1, 13], ["REAL CARTAGENA", 1, 12],
  ["AGUILAS DORADAS", 1, 13], ["UNION MAGDALENA", 2, 41], ["DEPORTES QUINDIO", 2, 41], ["DEPORTES TOLIMA", 3, 58],
  ["ONCE CALDAS", 3, 55], ["AMERICA DE CALI", 4, 77], ["DEPORTIVO PEREIRA", 5, 120], ["ATLETICO BUCARAMANGA", 6, 158],
  ["SANTA FE", 6, 156], ["CUCUTA DEPORTIVO", 7, 207], ["DEPORTIVO CALI", 7, 172], ["ATLETICO NACIONAL", 9, 180],
  ["JUNIOR", 10, 229], ["INDEPENDIENTE MEDELLIN", 15, 329], ["MILLONARIOS", 15, 379]
];
const note1 = [
  [1306, "<strong>Análisis 1.</strong> Los equipos con mayor número de goleadores son el Independiente Medellín y Millonarios con un total de 15 goleadores. La fila de suma de goles puede ignorarse, pero es para ver si hay una"],
  [1308, "correlación entre las veces que han tenido goleadores por década y la suma de goles en total de cada equipo. Aunque no hay una correlación exacta, o las celdas estarían organizadas en suma de goles"],
  [1328, "también de menor a mayor, si hay una relación de a bloques entre equipos con mayor suma de goles, y mayor número de goleadores. Sin embargo, este es un dato que puede obviarse a la hora de realizar"],
  [1200, "la gráfica dinámica porque sólo la complejiza y no es necesario para resolver a la pregunta. Ahora bien, lo dejo porque a la hora de realizar el gráfico la correlación se hace más evidente."]
];
const note2 = [
  [1316, "<strong>Análisis 2.</strong> El mismo análisis puede realizarse si en vez de contar las veces que han tenido goleadores por década estos equipos, se cuenta cuantos años han tenido goleadores este equipo. El resultado"],
  [1303, "sigue siendo el Independiente Medellín y Millonarios con el mayor número de goleadores cada año. Al igual que en la primera tabla, la columna de goles nos indica una correlación de semejanza, pero no"],
  [1338, "exactitud, entre el mayor número de goles por equipo, y el mayor número de goleadores. Sin embargo, este es un dato que puede obviarse a la hora de realizar la gráfica dinámica porque sólo la complejiza y"],
  [885, "no es necesario para resolver a la pregunta. Ahora bien, lo dejo porque a la hora de realizar el gráfico la correlación se hace más evidente."]
];
const heights = { 3: 19, 4: 92, 29: 75 };
const noteHtml = lines => lines.map(([w, t]) => `<div><span data-w="${w}">${t}</span></div>`).join("");
const fit = (w, t) => `<span data-w="${w}">${t}</span>`;
const sortIcon = '<span class="fbtn"><svg width="17" height="17" viewBox="0 0 17 17"><path d="M3 9h6l-3 4z" fill="#333"/><path d="M12.500 14V5M10.500 6.500l2-2.500 2 2.500" fill="none" stroke="#333" stroke-width="1.600"/></svg></span>';

let html = "";
for (let n = 1; n <= 29; n++) {
  let a = "", b = "", c = "", d = "", kind = "", hl = "";
  if (n >= 4 && n <= 22) { [a, b, c] = teams[n - 4]; kind = "plain"; }
  if (n === 3) { a = fit(114, "Etiquetas de fila") + sortIcon; b = fit(138, "Cuenta de DECADA"); c = fit(117, "Suma de GOLES"); d = `<strong>${fit(441, "P8: ¿Cuál ha sido el equipo con mayor número de goleadores?")}</strong>`; kind = "fill"; hl = "hl"; }
  if (n === 23) { a = "Total general"; b = 99; c = 2272; kind = "fill"; }
  if (n === 29) { a = fit(114, "Etiquetas de fila") + sortIcon; b = fit(110, "Cuenta de AÑO"); c = fit(117, "Suma de GOLES"); kind = "fill"; hl = "hl"; }
  if (n === 4) d = noteHtml(note1);
  if (n === 29) d = noteHtml(note2);
  const note = n === 4 || n === 29 ? "note" : "";
  html += `<div class="row r${n} ${kind}" style="height:${heights[n] || 18}px"><span class="num1">${n}</span>` +
    `<span class="cell data ${hl}">${a}</span><span class="cell data right ${hl}">${b}</span><span class="cell data right ${hl}">${c}</span>` +
    `<span class="cell dcol ${note}">${d}</span><span class="cell"></span></div>`;
}
document.getElementById("rows").innerHTML = html;

/* Pivot chart: columns on the 0-16 axis, line on the 0-400 axis. */
const x0 = 581.7, x1 = 1111.5, yTop = 494.5, yZero = 679.5, step = (x1 - x0) / teams.length, span = yZero - yTop;
const cx = i => x0 + step * (i + 0.5), ly = v => yZero - v / 400 * span;
let s = `<defs><linearGradient id="bar" gradientUnits="userSpaceOnUse" x1="0" y1="500" x2="0" y2="680"><stop offset="0" stop-color="#36757a"/><stop offset="1" stop-color="#1b6267"/></linearGradient>
<linearGradient id="gb" x1="0" y1="0" x2="0" y2="1"><stop offset="0" stop-color="#7f7f7f"/><stop offset="1" stop-color="#6a6a6a"/></linearGradient></defs>
<rect x="530.5" y="450.5" width="791" height="411" fill="#8f8f8f" stroke="#7a7a7a"/>`;
for (let k = 0; k <= 8; k++) {
  const y = Math.floor(yZero - k * span / 8) + 0.5;
  s += `<path d="M${x0} ${y}H${x1}" stroke="#777"/><text class="axis" x="570.5" y="${y + 5}" text-anchor="end" textLength="${[8, 15, 23][String(k * 50).length - 1]}" lengthAdjust="spacingAndGlyphs">${k * 50}</text><text class="axis" x="1123" y="${y + 5}" textLength="${k > 4 ? 14 : 7}" lengthAdjust="spacingAndGlyphs">${k * 2}</text>`;
}
teams.forEach(([name, d], i) => {
  const h = d / 16 * span;
  s += `<rect x="${cx(i) - 4}" y="${yZero - h}" width="8" height="${h}" fill="url(#bar)"/>`;
  s += `<text class="cat" text-anchor="end" transform="translate(${cx(i) + 3} 697.500) rotate(-45)">${name}</text>`;
});
s += `<polyline fill="none" stroke="#934003" stroke-width="4" stroke-linejoin="round" points="${teams.map((t, i) => cx(i) + "," + (ly(t[2]) - 0.5)).join(" ")}"/>`;
teams.forEach((t, i) => { s += `<circle cx="${cx(i)}" cy="${ly(t[2]) - 0.5}" r="3.8" fill="#934003" stroke="#96705a"/>`; });
const btn = (x, y, w, t, tw) => `<rect x="${x}" y="${y}" width="${w}" height="19" fill="url(#gb)"/><text class="btn" x="${x + 5}" y="${y + 14}" textLength="${tw}" lengthAdjust="spacingAndGlyphs">${t}</text>`;
s += btn(542, 459, 111, "Cuenta de DECADA", 105) + btn(654, 459, 95, "Suma de GOLES", 88) + btn(542, 832, 68, "EQUIPO", 44) + btn(1148, 623, 162, "Valores", 40);
s += `<path d="M596.500 840h8l-4 5z" fill="#222"/><rect x="1154" y="651" width="28" height="7" fill="#1f666b"/>
<text class="axis" x="1185" y="659" textLength="119" lengthAdjust="spacingAndGlyphs">Cuenta de DECADA</text>
<path d="M1154 678h28" stroke="#934003" stroke-width="3.600" stroke-linecap="round"/><circle cx="1167" cy="677" r="3.200" fill="#934003" stroke="#96705a"/>
<text class="axis" x="1185" y="682" textLength="101" lengthAdjust="spacingAndGlyphs">Suma de GOLES</text>`;
document.getElementById("chart").innerHTML = s;

/* Track each label so that it fills its allotted width. */
document.querySelectorAll("[data-w]").forEach(el => {
  const natural = el.getBoundingClientRect().width;
  el.style.letterSpacing = ((el.dataset.w - natural) / el.textContent.length).toFixed(3) + "px";
});
```
